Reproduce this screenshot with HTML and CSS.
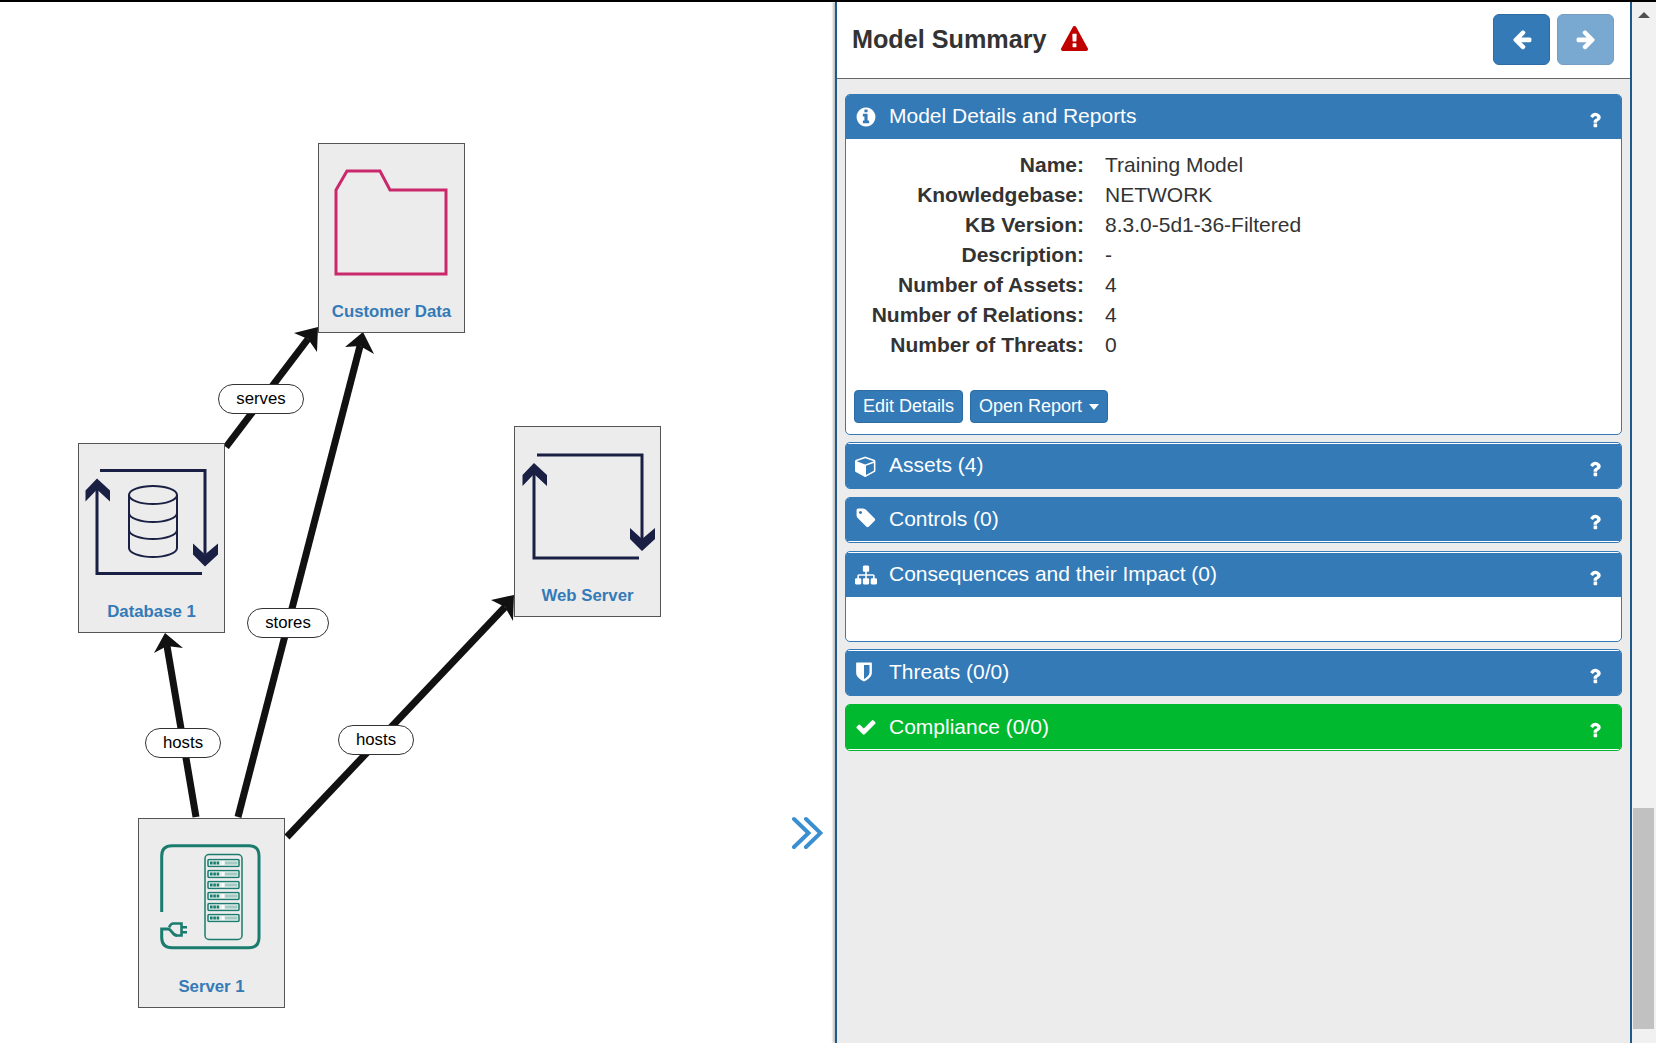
FILE: index.html
```html
<!DOCTYPE html>
<html lang="en">
<head>
    <meta charset="UTF-8">
    <title>Model Summary</title>
    <link rel="stylesheet" href="styles.css">
</head>
<body>
    <svg class="icon-defs" width="0" height="0">
        <symbol id="i-info" viewBox="0 0 1792 1792"><path d="M1152 1376v-160q0-14-9-23t-23-9h-96v-512q0-14-9-23t-23-9h-320q-14 0-23 9t-9 23v160q0 14 9 23t23 9h96v320h-96q-14 0-23 9t-9 23v160q0 14 9 23t23 9h448q14 0 23-9t9-23zm-128-896v-160q0-14-9-23t-23-9h-192q-14 0-23 9t-9 23v160q0 14 9 23t23 9h192q14 0 23-9t9-23zm640 416q0 209-103 385.5t-279.5 279.5-385.5 103-385.5-103-279.5-279.5-103-385.5 103-385.5 279.5-279.5 385.5-103 385.5 103 279.5 279.5 103 385.5z"/></symbol>
        <symbol id="i-cube" viewBox="0 0 1792 1792"><path d="M896 1629l640-349v-636l-640 233v752zm-64-865l698-254-698-254-698 254zm832-252v768q0 35-18 65t-49 47l-704 384q-28 16-61 16t-61-16l-704-384q-31-17-49-47t-18-65v-768q0-40 23-73t61-47l704-256q22-8 44-8t44 8l704 256q38 14 61 47t23 73z"/></symbol>
        <symbol id="i-tag" viewBox="0 0 1792 1792"><path d="M576 448q0-53-37.5-90.5t-90.5-37.5-90.5 37.5-37.5 90.5 37.5 90.5 90.5 37.5 90.5-37.5 37.5-90.5zm1067 576q0 53-37 90l-491 492q-39 37-91 37-53 0-90-37l-715-716q-38-37-64.5-101t-26.5-117v-416q0-52 38-90t90-38h416q53 0 117 26.5t102 64.5l715 714q37 39 37 91z"/></symbol>
        <symbol id="i-sitemap" viewBox="0 0 1792 1792"><path d="M1792 1248v320q0 40-28 68t-68 28h-320q-40 0-68-28t-28-68v-320q0-40 28-68t68-28h96v-192h-512v192h96q40 0 68 28t28 68v320q0 40-28 68t-68 28h-320q-40 0-68-28t-28-68v-320q0-40 28-68t68-28h96v-192h-512v192h96q40 0 68 28t28 68v320q0 40-28 68t-68 28h-320q-40 0-68-28t-28-68v-320q0-40 28-68t68-28h96v-192q0-52 38-90t90-38h512v-192h-96q-40 0-68-28t-28-68v-320q0-40 28-68t68-28h320q40 0 68 28t28 68v320q0 40-28 68t-68 28h-96v192h512q52 0 90 38t38 90v192h96q40 0 68 28t28 68z"/></symbol>
        <symbol id="i-shield" viewBox="0 0 1792 1792"><path d="M1344 960v-640h-448v1137q119-63 213-137 235-184 235-360zm192-768v768q0 86-33.5 170.5t-83 150-118 127.5-126.5 103-121 77.5-89.5 49.5-42.5 20q-12 6-26 6t-26-6q-16-7-42.5-20t-89.5-49.5-121-77.5-126.5-103-118-127.5-83-150-33.5-170.5v-768q0-26 19-45t45-19h1152q26 0 45 19t19 45z"/></symbol>
        <symbol id="i-check" viewBox="0 0 1792 1792"><path d="M1671 566q0 40-28 68l-724 724-136 136q-28 28-68 28t-68-28l-136-136-362-362q-28-28-28-68t28-68l136-136q28-28 68-28t68 28l294 295 656-657q28-28 68-28t68 28l136 136q28 28 28 68z"/></symbol>
        <symbol id="i-help" viewBox="0 0 1792 1792"><path d="M1088 1256v240q0 16-12 28t-28 12h-240q-16 0-28-12t-12-28v-240q0-16 12-28t28-12h240q16 0 28 12t12 28zm316-600q0 54-15.5 101t-35 76.5-55 59.5-57.5 43.5-61 35.5q-41 23-68.5 65t-27.5 67q0 17-12 32.5t-28 15.5h-240q-15 0-25.5-18.5t-10.5-37.5v-45q0-83 65-156.5t143-108.5q59-27 84-56t25-76q0-42-46.5-74t-107.5-32q-65 0-108 29-35 25-107 115-13 16-31 16-12 0-25-8l-164-125q-13-10-15.5-25t5.5-28q160-266 464-266 80 0 161 31t146 83 106 127.5 41 158.5z"/></symbol>
        <symbol id="i-warning" viewBox="0 0 1792 1792"><path d="M1024 1375v-190q0-14-9.5-23.5t-22.5-9.5h-192q-13 0-22.5 9.5t-9.5 23.5v190q0 14 9.5 23.5t22.5 9.5h192q13 0 22.5-9.5t9.5-23.5zm-2-374l18-459q0-12-10-19-13-11-24-11h-220q-11 0-24 11-10 7-10 21l17 457q0 10 10 16.5t24 6.5h185q14 0 23.5-6.5t10.5-16.5zm-14-934l768 1408q35 63-2 126-17 29-46.5 46t-63.5 17h-1536q-34 0-63.5-17t-46.5-46q-37-63-2-126l768-1408q17-31 47-49t65-18 65 18 47 49z"/></symbol>
        <symbol id="i-left" viewBox="0 0 1792 1792"><path d="M1664 896v128q0 53-32.5 90.5t-84.5 37.5h-704l293 294q38 36 38 90t-38 90l-75 76q-37 37-90 37-52 0-91-37l-651-652q-37-37-37-90 0-52 37-91l651-650q38-38 91-38 52 0 90 38l75 74q38 38 38 91t-38 91l-293 293h704q52 0 84.5 37.5t32.5 90.5z"/></symbol>
        <symbol id="i-right" viewBox="0 0 1792 1792"><path d="M1600 960q0 54-37 91l-651 651q-39 37-91 37-51 0-90-37l-75-75q-38-38-38-91t38-91l293-293h-704q-52 0-84.5-37.5t-32.5-90.5v-128q0-53 32.5-90.5t84.5-37.5h704l-293-294q-38-36-38-90t38-90l75-75q38-38 90-38 53 0 91 38l651 651q37 35 37 90z"/></symbol>
        <symbol id="i-cycle" viewBox="0 0 145 150">
            <path class="cycle-line" d="M22 28H127V112M124 131H19V40"/>
            <path class="cycle-head" d="M19 36 7.500 48V59L19 47 32 59V48ZM115 101V112L127 124 140 112V101L127 112Z"/>
        </symbol>
        <symbol id="i-unit" viewBox="0 0 33 9">
            <rect class="unit-box" x="1" y="1" width="31" height="7" rx="1"/>
            <path class="unit-dots" d="M3 3h2.600v3H3zM6.300 3h2.600v3H6.300zM9.600 3h2.600v3H9.600z"/>
            <path class="unit-bar" d="M18 3h12.500v3H18z"/>
            <path class="unit-tick" d="M15 2.500h1.600v4H15z"/>
        </symbol>
    </svg>

    <div class="app">
        <div class="canvas">
            <svg class="links" viewBox="0 2 835 1041">
                <g class="link">
                    <path d="M226 447 308 339"/>
                    <polygon points="318,327 294,333 308,339 317,352"/>
                </g>
                <g class="link">
                    <path d="M238 817 360 346"/>
                    <polygon points="363,332 345,347 360,346 374,354"/>
                </g>
                <g class="link">
                    <path d="M196 817 167 646"/>
                    <polygon points="165,633 154,653 167,646 183,648"/>
                </g>
                <g class="link">
                    <path d="M287 837 505 607"/>
                    <polygon points="514,595 491,600 505,607 513,621"/>
                </g>
            </svg>

            <div class="node node-data">
                <svg class="node-icon" viewBox="0 0 145 150">
                    <path class="folder" d="M17 46 28 27H61L71 46H127V130H17Z"/>
                </svg>
                <div class="node-name">Customer Data</div>
            </div>
            <div class="node node-db">
                <svg class="node-icon" viewBox="0 0 145 150">
                    <use href="#i-cycle" x="-1" y="-1.500" width="145" height="150"/>
                    <g class="cylinder">
                        <ellipse cx="74" cy="51" rx="24" ry="9"/>
                        <path d="M50 51V104C50 109 61 113 74 113S98 109 98 104V51"/>
                        <path d="M50 69C50 74 61 78 74 78S98 74 98 69"/>
                        <path d="M50 86C50 91 61 95 74 95S98 91 98 86"/>
                    </g>
                </svg>
                <div class="node-name">Database 1</div>
            </div>
            <div class="node node-web">
                <svg class="node-icon" viewBox="0 0 145 150">
                    <use href="#i-cycle" width="145" height="150"/>
                </svg>
                <div class="node-name">Web Server</div>
            </div>
            <div class="node node-server">
                <svg class="node-icon" viewBox="0 0 145 150">
                    <path class="server-loop" d="M22.700 93V37Q22.700 26.700 33 26.700H110Q120 26.700 120 37V118.500Q120 128.700 110 128.700H33Q22.700 128.700 22.700 118.500V110H29C33 110 33 116.500 38 116.500"/>
                    <path class="server-plug" d="M38 116.500H42.500V104.500H34C31.500 104.500 31 107 30 108.500"/>
                    <path class="server-prong" d="M43 107h5v2.600h-5zM43 112h5v2.600h-5z"/>
                    <rect class="server-rack" x="66" y="35.500" width="37" height="85" rx="4"/>
                    <use href="#i-unit" x="68" y="39.500" width="33" height="9"/>
                    <use href="#i-unit" x="68" y="50.500" width="33" height="9"/>
                    <use href="#i-unit" x="68" y="61.500" width="33" height="9"/>
                    <use href="#i-unit" x="68" y="72.500" width="33" height="9"/>
                    <use href="#i-unit" x="68" y="83.500" width="33" height="9"/>
                    <use href="#i-unit" x="68" y="94.500" width="33" height="9"/>
                </svg>
                <div class="node-name">Server 1</div>
            </div>

            <div class="link-label label-serves">serves</div>
            <div class="link-label label-stores">stores</div>
            <div class="link-label label-hosts-db">hosts</div>
            <div class="link-label label-hosts-web">hosts</div>

            <svg class="collapse" viewBox="0 0 32 36">
                <path d="M3 3 17.500 17 3 31M15 3 29.500 17 15 31"/>
            </svg>
        </div>

        <div class="panel-side">
            <div class="summary-header">
                <h1 class="summary-title">Model Summary</h1>
                <svg class="icon icon-warning"><use href="#i-warning"/></svg>
                <div class="nav-btns">
                    <button class="nav-btn"><svg class="icon"><use href="#i-left"/></svg></button>
                    <button class="nav-btn nav-btn-off"><svg class="icon"><use href="#i-right"/></svg></button>
                </div>
            </div>

            <div class="panel-list">
                <div class="panel panel-open">
                    <div class="panel-head">
                        <svg class="icon"><use href="#i-info"/></svg>
                        <span class="panel-title">Model Details and Reports</span>
                        <svg class="icon icon-help"><use href="#i-help"/></svg>
                    </div>
                    <div class="panel-body">
                        <div class="details">
                            <div class="details-key">Name:</div><div>Training Model</div>
                            <div class="details-key">Knowledgebase:</div><div>NETWORK</div>
                            <div class="details-key">KB Version:</div><div>8.3.0-5d1-36-Filtered</div>
                            <div class="details-key">Description:</div><div>-</div>
                            <div class="details-key">Number of Assets:</div><div>4</div>
                            <div class="details-key">Number of Relations:</div><div>4</div>
                            <div class="details-key">Number of Threats:</div><div>0</div>
                        </div>
                        <div class="details-btns">
                            <button class="btn">Edit Details</button>
                            <button class="btn">Open Report <span class="caret"></span></button>
                        </div>
                    </div>
                </div>

                <div class="panel panel-gap-top">
                    <div class="panel-head">
                        <svg class="icon"><use href="#i-cube"/></svg>
                        <span class="panel-title">Assets (4)</span>
                        <svg class="icon icon-help"><use href="#i-help"/></svg>
                    </div>
                </div>
                <div class="panel panel-gap-bottom panel-short">
                    <div class="panel-head">
                        <svg class="icon icon-tag"><use href="#i-tag"/></svg>
                        <span class="panel-title">Controls (0)</span>
                        <svg class="icon icon-help"><use href="#i-help"/></svg>
                    </div>
                </div>
                <div class="panel panel-open panel-gap-top">
                    <div class="panel-head">
                        <svg class="icon"><use href="#i-sitemap"/></svg>
                        <span class="panel-title">Consequences and their Impact (0)</span>
                        <svg class="icon icon-help"><use href="#i-help"/></svg>
                    </div>
                    <div class="panel-empty"></div>
                </div>
                <div class="panel panel-gap-top">
                    <div class="panel-head">
                        <svg class="icon icon-shield"><use href="#i-shield"/></svg>
                        <span class="panel-title">Threats (0/0)</span>
                        <svg class="icon icon-help"><use href="#i-help"/></svg>
                    </div>
                </div>
                <div class="panel panel-ok panel-gap-bottom">
                    <div class="panel-head">
                        <svg class="icon"><use href="#i-check"/></svg>
                        <span class="panel-title">Compliance (0/0)</span>
                        <svg class="icon icon-help"><use href="#i-help"/></svg>
                    </div>
                </div>
            </div>
        </div>

        <div class="scrollbar">
            <div class="scroll-up"></div>
            <div class="scroll-thumb"></div>
        </div>
    </div>
</body>
</html>
```

FILE: styles.css
```css
* {
    box-sizing: border-box;
}
html, body {
    margin: 0;
    height: 100%;
    overflow: hidden;
}
body {
    background: #fff;
    color: #333;
    font-family: "Liberation Sans", Arial, sans-serif;
}
.icon-defs {
    position: absolute;
}
.app {
    display: flex;
    height: 1043px;
    border-top: 2px solid #000;
}

/* diagram */
.canvas {
    position: relative;
    width: 835px;
    flex: none;
}
.links {
    position: absolute;
    left: 0;
    top: 0;
    width: 835px;
    height: 1041px;
}
.link path {
    fill: none;
    stroke: #111;
    stroke-width: 7;
}
.link polygon {
    fill: #111;
}
.node {
    position: absolute;
    width: 147px;
    height: 190px;
    background: #ececec;
    border: 1px solid #555;
    display: flex;
    flex-direction: column;
    align-items: center;
}
.node-data { left: 318px; top: 141px; }
.node-db { left: 78px; top: 441px; }
.node-web { left: 514px; top: 424px; height: 191px; }
.node-server { left: 138px; top: 816px; }
.node-icon {
    display: block;
    width: 145px;
    height: 150px;
    flex: none;
}
.node-name {
    margin-top: 8px;
    font-size: 16.8px;
    line-height: 20px;
    font-weight: bold;
    color: #337ab7;
}
.node-web .node-name {
    margin-top: 9px;
}
.folder {
    fill: none;
    stroke: #c9296c;
    stroke-width: 3;
}
.cycle-line {
    fill: none;
    stroke: #1a1f44;
    stroke-width: 3;
}
.cycle-head {
    fill: #1a1f44;
}
.cylinder {
    fill: none;
    stroke: #1a1f44;
    stroke-width: 2;
}
.server-loop {
    fill: none;
    stroke: #1a7c6e;
    stroke-width: 3;
}
.server-plug {
    fill: none;
    stroke: #1a7c6e;
    stroke-width: 2.6;
}
.server-prong {
    fill: #1a7c6e;
}
.server-rack {
    fill: none;
    stroke: #1a7c6e;
    stroke-width: 1.5;
}
.unit-box {
    fill: #e6efed;
    stroke: #1a7c6e;
    stroke-width: 1.5;
}
.unit-dots {
    fill: #1a7c6e;
}
.unit-bar {
    fill: #a3c9c2;
}
.unit-tick {
    fill: #fff;
}
.link-label {
    position: absolute;
    height: 30px;
    background: #fff;
    border: 1px solid #333;
    border-radius: 15px;
    color: #000;
    font-size: 16.8px;
    line-height: 27px;
    text-align: center;
}
.label-serves { left: 218px; top: 382px; width: 86px; }
.label-stores { left: 247px; top: 606px; width: 82px; }
.label-hosts-db { left: 145px; top: 726px; width: 76px; }
.label-hosts-web { left: 338px; top: 723px; width: 76px; }
.collapse {
    position: absolute;
    left: 791px;
    top: 814px;
    width: 32px;
    height: 36px;
}
.collapse path {
    fill: none;
    stroke: #3a8fd0;
    stroke-width: 4;
    stroke-linecap: round;
    stroke-linejoin: miter;
}

/* summary panel */
.panel-side {
    width: 797px;
    flex: none;
    background: #ececec;
    border-left: 2px solid #1f5a8a;
    border-right: 2px solid #1f5a8a;
    box-shadow: -2px 0 2px rgba(0, 0, 0, 0.25);
    position: relative;
}
.summary-header {
    display: flex;
    align-items: center;
    height: 77px;
    padding: 0 16px 2px 15px;
    background: #fff;
    border-bottom: 1px solid #666;
}
.summary-title {
    margin: 0;
    font-size: 25.2px;
    font-weight: bold;
    color: #333;
}
.icon {
    display: block;
    width: 22px;
    height: 22px;
    fill: #fff;
    flex: none;
}
.icon-warning {
    width: 27px;
    height: 27px;
    margin-left: 14px;
    fill: #c00000;
}
.icon-tag {
    margin-top: -3px;
}
.icon-shield {
    margin: -3px 2px 0 -2px;
}
.nav-btns {
    display: flex;
    gap: 7px;
    margin-left: auto;
}
.nav-btn {
    width: 57px;
    height: 51px;
    padding: 0;
    border: 1px solid #2e6da4;
    border-radius: 6px;
    background: #337ab7;
    display: flex;
    align-items: center;
    justify-content: center;
}
.nav-btn-off {
    opacity: 0.65;
}
.panel-list {
    display: flex;
    flex-direction: column;
    gap: 8px;
    padding: 15px 8px 0;
}
.panel {
    border: 1px solid #337ab7;
    border-radius: 5px;
    background: #fff;
    overflow: hidden;
}
.panel-open {
    margin-bottom: -1px;
}
.panel-head {
    display: flex;
    align-items: center;
    height: 44px;
    padding: 0 16px 0 9px;
    background: #337ab7;
    color: #fff;
    font-size: 21px;
}
.panel-title {
    margin-left: 12px;
    padding-bottom: 3px;
}
.panel-short .panel-title,
.panel-ok .panel-title {
    padding-bottom: 1px;
}
.icon-help {
    width: 20px;
    height: 20px;
    margin-left: auto;
    margin-top: 5px;
}
.panel-gap-top .panel-head {
    margin-top: 1px;
}
.panel-gap-bottom .panel-head {
    margin-bottom: 1px;
}
.panel-short .panel-head {
    height: 43px;
}
.panel-ok {
    border-color: #00b92f;
}
.panel-ok .panel-head {
    background: #00b92f;
}
.panel-body {
    height: 295px;
    padding: 11px 8px;
    font-size: 21px;
}
.panel-empty {
    height: 44px;
}
.details {
    display: grid;
    grid-template-columns: 230px 1fr;
    column-gap: 21px;
    grid-auto-rows: 30px;
    line-height: 30px;
}
.details-key {
    text-align: right;
    font-weight: bold;
}
.details-btns {
    display: flex;
    gap: 7px;
    margin-top: 30px;
}
.btn {
    height: 33px;
    padding: 0 8px;
    border: 1px solid #2e6da4;
    border-radius: 4px;
    background: #337ab7;
    color: #fff;
    font-family: inherit;
    font-size: 18px;
}
.caret {
    display: inline-block;
    margin-left: 2px;
    vertical-align: middle;
    border-top: 6px solid #fff;
    border-left: 5.5px solid transparent;
    border-right: 5.5px solid transparent;
}

/* page scrollbar */
.scrollbar {
    position: relative;
    flex: 1;
    background: #f1f1f1;
}
.scroll-up {
    position: absolute;
    left: 6px;
    top: 10px;
    border-bottom: 6px solid #505050;
    border-left: 6px solid transparent;
    border-right: 6px solid transparent;
}
.scroll-thumb {
    position: absolute;
    left: 1px;
    top: 806px;
    width: 21px;
    height: 221px;
    background: #c1c1c1;
}
```
